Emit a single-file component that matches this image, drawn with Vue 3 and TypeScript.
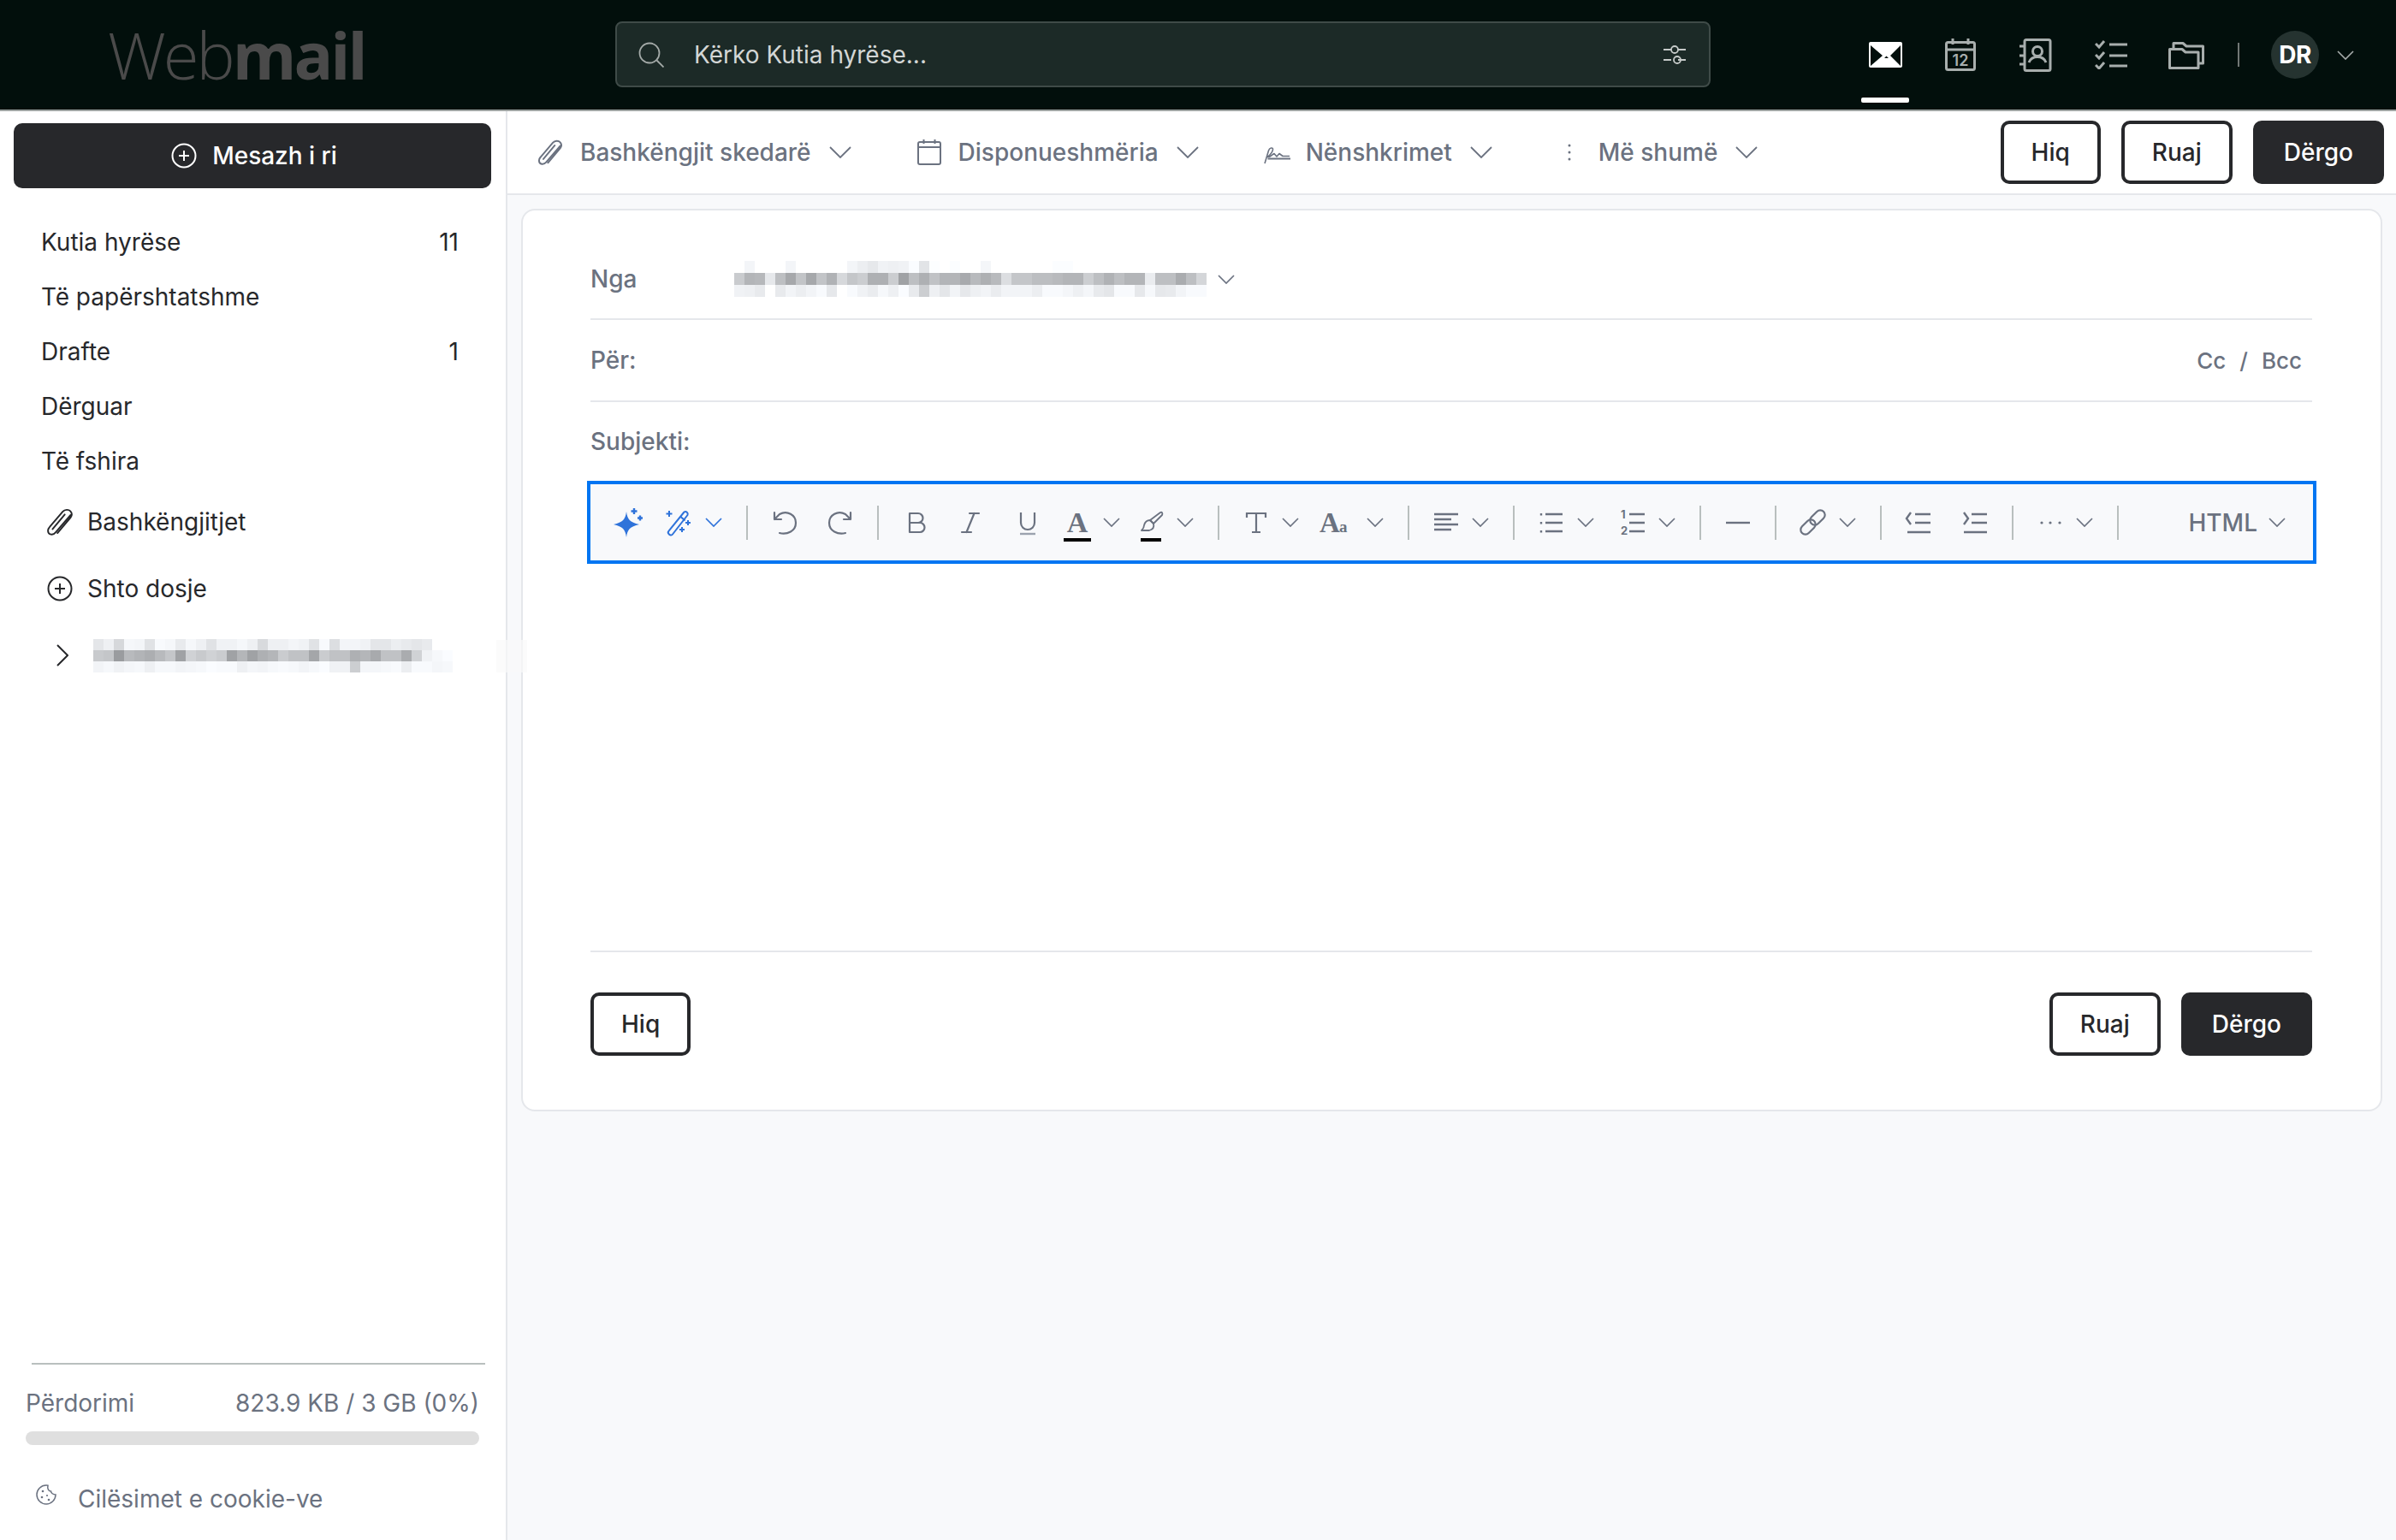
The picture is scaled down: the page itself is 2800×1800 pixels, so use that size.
<script setup lang="ts">
interface ToolItem { i: string; c?: boolean; g?: number; cm?: number; bar?: number }

const icons: Record<string, string> = {
  spark: '<path fill="#2f73da" d="M16 5C17.200 14 20 17.500 31 20C20 22.500 17.200 26 16 35C14.800 26 12 22.500 1 20C12 17.500 14.800 14 16 5Z"/><path stroke="#2f73da" stroke-width="2.400" fill="none" d="M25 1V8M21.500 4.500H28.500M32 9.500V15.500M29 12.500H35"/>',
  wand: '<g stroke="#2f73da" stroke-width="2" fill="none"><path stroke-linejoin="round" d="M23.500 5.500a2.800 2.800 0 0 1 4 3.500L10 31.500a2.500 2.500 0 0 1-3.800.2l-.5-.5a2.500 2.500 0 0 1-.2-3.500Z"/><path d="M19.500 11l5 4.500"/><path d="M6 4v7M2.500 7.500h7M28 15v6M25 18h6M21 23v6M18 26h6"/></g>',
  undo: '<path fill="none" stroke="#6b7280" stroke-width="2.200" stroke-linecap="round" stroke-linejoin="round" d="M12 30C21 32 31 28 31 18C31 9 21 3 12 8L6 14M6 6V14H14"/>',
  redo: '<path fill="none" stroke="#6b7280" stroke-width="2.200" stroke-linecap="round" stroke-linejoin="round" d="M24 30C15 32 5 28 5 18C5 9 15 3 24 8L30 14M30 6V14H22"/>',
  b: '<path fill="none" stroke="#6b7280" stroke-width="2.200" stroke-linejoin="round" d="M9 7H19A5.500 5.500 0 0 1 19 18H9ZM9 18H21A5.500 5.500 0 0 1 21 29H9Z"/>',
  i: '<path fill="none" stroke="#6b7280" stroke-width="2.200" stroke-linecap="round" d="M17 7H28M8 29H19M22.500 7L13.500 29"/>',
  u: '<path fill="none" stroke="#6b7280" stroke-width="2.200" d="M10 6V18A8 8 0 0 0 26 18V6"/><path stroke="#9ca3af" stroke-width="2.400" d="M9 31H27"/>',
  a: '<text x="18" y="29" text-anchor="middle" font-family="Liberation Serif" font-weight="700" font-size="34" fill="#6b7280">A</text>',
  brush: '<g fill="none" stroke="#6b7280" stroke-width="1.800" stroke-linejoin="round"><path d="M29 6C31 5 32 7 31 9L21 19L17 15Z"/><path d="M17 15C13 15 11 17 10 21C10 24 8 26 7 27H16C20 26 22 23 21 19Z"/></g>',
  t: '<path fill="none" stroke="#6b7280" stroke-width="2.200" d="M7 12V7H29V12M18 7V29M13 29H23"/>',
  aa: '<text x="0" y="29" font-family="Liberation Serif" font-weight="700" font-size="33" fill="#6b7280">A</text><text x="23" y="29" font-family="Liberation Serif" font-weight="700" font-size="19" fill="#6b7280">a</text>',
  align: '<path stroke="#6b7280" stroke-width="2.400" d="M4 8H32M4 14H24M4 20H32M4 26H24"/>',
  list: '<path stroke="#6b7280" stroke-width="2.400" d="M11 8H31M11 18H31M11 28H31"/><path stroke="#6b7280" stroke-width="2.400" stroke-dasharray="2.400 7.600" d="M6 7V30"/>',
  num: '<path stroke="#6b7280" stroke-width="2.400" d="M14 8H32M14 18H32M14 28H32"/><text x="4" y="13" font-family="Inter" font-weight="700" font-size="13" fill="#6b7280">1</text><text x="4" y="32" font-family="Inter" font-weight="700" font-size="13" fill="#6b7280">2</text>',
  hr: '<path stroke="#6b7280" stroke-width="2.400" d="M4 18H32"/>',
  link: '<g fill="none" stroke="#6b7280" stroke-width="2.200"><rect x="-10" y="-5.500" width="20" height="11" rx="5.500" transform="translate(12 23) rotate(-45)"/><rect x="-10" y="-5.500" width="20" height="11" rx="5.500" transform="translate(23 12) rotate(-45)"/></g>',
  out: '<path fill="none" stroke="#6b7280" stroke-width="2.400" d="M9 6L4 13L9 20M14 8H32M14 18H32M5 29H32"/>',
  ind: '<path fill="none" stroke="#6b7280" stroke-width="2.400" d="M5 6L10 13L5 20M14 8H32M14 18H32M5 29H32"/>',
  dots: '<g fill="#6b7280"><circle cx="8" cy="18" r="1.600"/><circle cx="18" cy="18" r="1.600"/><circle cx="29" cy="18" r="1.600"/></g>',
}

const groups: ToolItem[][] = [
  [{ i: 'spark' }, { i: 'wand', c: true, g: 24 }],
  [{ i: 'undo' }, { i: 'redo', g: 29 }],
  [{ i: 'b', g: 2 }, { i: 'i', g: 26 }, { i: 'u', g: 31 }, { i: 'a', c: true, g: 22, bar: 32 }, { i: 'brush', c: true, g: 15, bar: 24 }],
  [{ i: 't', c: true }, { i: 'aa', c: true, g: 21, cm: 19 }],
  [{ i: 'align', c: true }],
  [{ i: 'list', c: true }, { i: 'num', c: true, g: 24 }],
  [{ i: 'hr' }],
  [{ i: 'link', c: true }],
  [{ i: 'out' }, { i: 'ind', g: 30 }],
  [{ i: 'dots', c: true }],
]

const folders = [
  { name: 'Kutia hyrëse', count: '11' },
  { name: 'Të papërshtatshme', count: '' },
  { name: 'Drafte', count: '1' },
  { name: 'Dërguar', count: '' },
  { name: 'Të fshira', count: '' },
]

const parse = (s: string): string[] =>
  s.split(' ').map((h) => {
    const v = parseInt(h, 16)
    return `rgb(${v},${Math.min(255, v + 2)},${Math.min(255, v + 5)})`
  })

const fromBlur = [
  'ff f3 ff ff ff f3 ff ff ff ff ff f3 ec e6 f0 ee f0 fa e2 fc ff fb ff ff f4 ff ff ff ff ff ff fb fb ff ff ff ff ff ff ff ff ff ff ff ff ff',
  'c9 b3 b6 e6 bd a6 c2 a6 c2 b0 d6 c4 cb ae ae cb a0 bd ae c0 b3 b3 a8 b8 ae b8 dc c4 c4 bc bc b8 b3 b3 cc bd b0 bd b3 b3 ea bd bd aa bd d4',
  'f0 ee e8 ff e8 f2 ec f2 f8 e6 ff f8 f0 ea f6 ee fa e8 cc ee e4 f2 e6 ee f2 ea f2 f2 f2 ec f8 f8 f4 ee f4 e8 e4 f8 f8 e6 f6 e6 e8 f2 f8 f8',
].map(parse)

const accBlur = [
  'e4 ee d6 f5 f3 e0 f8 f5 e8 f5 ee e0 f0 f0 f5 ee d8 ee ee f3 f0 e0 f8 dc f3 f3 f0 e4 e4 ec e8 e4 e8 ff ff',
  'c8 c4 9a b8 b2 ac b8 c4 a0 d0 c8 d0 ca a0 b4 a0 ae b4 ca c0 c0 a4 ca c0 c0 ae b4 a8 c0 c0 aa d0 f0 f6 fa',
  'f2 f6 f0 f4 f6 ee f6 f6 f2 f4 f6 fa f8 f8 ee f4 f2 f6 f8 f6 f2 f6 fa f0 f0 cc f4 f4 f6 f8 ec f8 f8 f4 f6',
].map(parse)
</script>

<template>
  <div class="app">
    <header class="top">
      <div class="logo-wrap"><span class="logo"><span class="thin">Web</span><b>mail</b></span></div>
      <div class="search">
        <svg class="s-ic" width="30" height="30" viewBox="0 0 30 30" fill="none" stroke="#a4aaa8" stroke-width="1.800"><circle cx="13" cy="13" r="11.500"/><path d="M21.500 21.500L29.500 29.500"/></svg>
        <span class="s-text">Kërko Kutia hyrëse...</span>
        <svg class="s-f" width="28" height="24" viewBox="0 0 28 24" fill="none" stroke="#c6cac9" stroke-width="1.800"><path d="M1 6H10M18 6H27M1 18H10M18 18H27"/><circle cx="14" cy="6" r="4"/><circle cx="17" cy="18" r="4"/></svg>
      </div>
      <nav class="nav">
        <span class="nav-item active">
          <svg width="39" height="30" viewBox="0 0 39 30"><rect width="39" height="30" rx="2" fill="#fff"/><path fill="#020f0c" d="M2 4L16 16L2 28ZM37 4L25 16L37 28ZM20.500 16.500L18 19H23Z"/></svg>
        </span>
        <span class="nav-item">
          <svg width="36" height="38" viewBox="0 0 36 38" fill="none" stroke="#a8aead" stroke-width="3"><rect x="1.500" y="4.500" width="33" height="32" rx="2"/><path d="M1.500 13H34.500M9 0V7M27 0V7" /><text x="18" y="32" text-anchor="middle" font-family="Inter" font-weight="600" font-size="18" fill="#a8aead" stroke="none">12</text></svg>
        </span>
        <span class="nav-item">
          <svg width="38" height="39" viewBox="0 0 38 39" fill="none" stroke="#a8aead" stroke-width="3"><rect x="6" y="1.500" width="30" height="36" rx="2"/><circle cx="21" cy="15" r="5.500"/><path d="M11 28C13 23 17 21.500 21 21.500C25 21.500 29 23 31 28"/><path d="M0 9H6M0 20H6M0 30H6"/></svg>
        </span>
        <span class="nav-item">
          <svg width="38" height="34" viewBox="0 0 38 34" fill="none" stroke="#a8aead" stroke-width="3"><path d="M17 5H38M17 18H38M17 30H38"/><path d="M1 4L5 8L11 1M1 17L5 21L11 14M1 29L5 33L11 26"/></svg>
        </span>
        <span class="nav-item">
          <svg width="42" height="34" viewBox="0 0 42 34" fill="none" stroke="#a8aead" stroke-width="3" stroke-linejoin="round"><path d="M6 10.500V3.500H17L21 7H40.500V27H35"/><path d="M1.500 32.500H35V14H20L16 10.500H1.500Z"/></svg>
        </span>
      </nav>
      <span class="nav-div"></span>
      <span class="avatar">DR</span>
      <svg class="nav-chev" width="20" height="11" viewBox="0 0 20 11" fill="none" stroke="#a8aead" stroke-width="1.600"><path d="M1 1L10 10L19 1"/></svg>
    </header>

    <div class="body">
      <aside class="side">
        <button class="new">
          <svg width="30" height="30" viewBox="0 0 30 30" fill="none" stroke="#fff" stroke-width="2"><circle cx="15" cy="15" r="13.500"/><path d="M15 9V21M9 15H21"/></svg>
          Mesazh i ri
        </button>
        <ul class="menu">
          <li v-for="f in folders" :key="f.name" class="m-row"><span>{{ f.name }}</span><span>{{ f.count }}</span></li>
        </ul>
        <div class="act">
          <svg width="30" height="33" viewBox="1 0 26 29" fill="none" stroke="#27282b" stroke-width="1.700" stroke-linecap="round"><path d="M25 7L9.500 25C7 28 2 27.500 1.800 23.500C1.700 22 2.300 20.500 3.500 19.200L17 3.500C19 1.200 23 1 24.700 3C26.500 5 26.500 7.500 25 9.500L11.500 25.500"/><path d="M19 6.500L6.500 21.500"/></svg>
          <span>Bashkëngjitjet</span>
        </div>
        <div class="act">
          <svg width="30" height="30" viewBox="0 0 30 30" fill="none" stroke="#27282b" stroke-width="2"><circle cx="15" cy="15" r="13.500"/><path d="M15 9V21M9 15H21"/></svg>
          <span>Shto dosje</span>
        </div>
        <div class="acc">
          <svg class="acc-ch" width="14" height="26" viewBox="0 0 14 26" fill="none" stroke="#27282b" stroke-width="2"><path d="M1 1L13 13L1 25"/></svg>
          <div class="blur">
            <div v-for="(r, ri) in accBlur" :key="ri" class="b-row">
              <i v-for="(c, ci) in r" :key="ci" class="cell" :style="{ background: c }"></i>
            </div>
          </div>
        </div>
        <div class="ghost"></div>
        <div class="foot">
          <div class="f-line"></div>
          <div class="use"><span>Përdorimi</span><span>823.9 KB / 3 GB (0%)</span></div>
          <div class="bar"></div>
          <div class="cookie">
            <svg width="24" height="24" viewBox="0 0 24 24" fill="none" stroke="#6b7280" stroke-width="1.500"><path d="M12 1C6 1 1 6 1 12C1 18 6 23 12 23C18 23 23 18 23 12C20 12 17.500 10 17.500 8C15 8 13 5 14 1.200C13.500 1 12.500 1 12 1Z"/><g fill="#6b7280" stroke="none"><circle cx="8" cy="8" r="1.300"/><circle cx="7" cy="15" r="1.300"/><circle cx="13" cy="13" r="1.100"/><circle cx="15" cy="18" r="1.300"/></g></svg>
            <span>Cilësimet e cookie-ve</span>
          </div>
        </div>
      </aside>

      <main class="main">
        <div class="bar-top">
          <div class="tool t1">
            <svg width="28" height="31" viewBox="1 0 26 29" fill="none" stroke="#6b7280" stroke-width="1.800" stroke-linecap="round"><path d="M25 7L9.500 25C7 28 2 27.500 1.800 23.500C1.700 22 2.300 20.500 3.500 19.200L17 3.500C19 1.200 23 1 24.700 3C26.500 5 26.500 7.500 25 9.500L11.500 25.500"/><path d="M19 6.500L6.500 21.500"/></svg>
            <span>Bashkëngjit skedarë</span>
            <svg class="tchev" width="26" height="14" viewBox="0 0 26 14" fill="none" stroke="#6b7280" stroke-width="1.800"><path d="M1 1L13 13L25 1"/></svg>
          </div>
          <div class="tool t2">
            <svg width="28" height="30" viewBox="0 0 28 30" fill="none" stroke="#6b7280" stroke-width="2"><rect x="1" y="3" width="26" height="26" rx="2"/><path d="M1 9H27M7.500 0V5M20.500 0V5"/></svg>
            <span>Disponueshmëria</span>
            <svg class="tchev" width="26" height="14" viewBox="0 0 26 14" fill="none" stroke="#6b7280" stroke-width="1.800"><path d="M1 1L13 13L25 1"/></svg>
          </div>
          <div class="tool t3">
            <svg class="sign" width="32" height="20" viewBox="0 0 32 20" fill="none" stroke="#6b7280" stroke-width="1.600" stroke-linejoin="round"><path d="M1 19L5.500 4C6.500 0.500 10.500 0 10.500 2.500C10.500 6 7 9 4.500 11.500C7 12 9 9 12 7.500L15 11L18 7.500L22 10.500H30"/><path d="M4.500 13.500H31" stroke-width="2"/></svg>
            <span>Nënshkrimet</span>
            <svg class="tchev" width="26" height="14" viewBox="0 0 26 14" fill="none" stroke="#6b7280" stroke-width="1.800"><path d="M1 1L13 13L25 1"/></svg>
          </div>
          <div class="tool t4">
            <svg width="4" height="22" viewBox="0 0 4 22" fill="#6b7280"><circle cx="2" cy="3" r="1.500"/><circle cx="2" cy="11" r="1.500"/><circle cx="2" cy="19" r="1.500"/></svg>
            <span>Më shumë</span>
            <svg class="tchev" width="26" height="14" viewBox="0 0 26 14" fill="none" stroke="#6b7280" stroke-width="1.800"><path d="M1 1L13 13L25 1"/></svg>
          </div>
          <div class="top-btns">
            <button class="btn">Hiq</button>
            <button class="btn">Ruaj</button>
            <button class="btn dark">Dërgo</button>
          </div>
        </div>

        <section class="card">
          <div class="row r-from">
            <span class="lab">Nga</span>
            <div class="blur from">
              <div v-for="(r, ri) in fromBlur" :key="ri" class="b-row">
                <i v-for="(c, ci) in r" :key="ci" class="cell" :style="{ background: c }"></i>
              </div>
            </div>
            <svg class="from-ch" width="20" height="11" viewBox="0 0 20 11" fill="none" stroke="#6b7280" stroke-width="1.700"><path d="M1 1L10 10L19 1"/></svg>
          </div>
          <div class="row r-to">
            <span class="lab">Për:</span>
            <span class="cc"><span>Cc</span><span>/</span><span>Bcc</span></span>
          </div>
          <div class="row r-sub"><span class="lab">Subjekti:</span></div>

          <div class="rte">
            <template v-for="(g, gi) in groups" :key="gi">
              <span v-if="gi > 0" class="sep"></span>
              <span class="grp">
                <span v-for="it in g" :key="it.i" class="ti" :style="{ marginLeft: (it.g || 0) + 'px' }">
                  <span class="ib">
                    <svg width="36" height="36" viewBox="0 0 36 36" v-html="icons[it.i]"></svg>
                    <span v-if="it.bar" class="ibar" :style="{ width: it.bar + 'px' }"></span>
                  </span>
                  <svg v-if="it.c" class="rch" :class="{ blue: it.i === 'wand' }" :style="it.cm ? { marginLeft: it.cm + 'px' } : undefined" width="20" height="11" viewBox="0 0 20 11" fill="none" stroke-width="1.700"><path d="M1 1L10 10L19 1"/></svg>
                </span>
              </span>
            </template>
            <span class="sep"></span>
            <span class="html">HTML<svg class="rch html-ch" width="20" height="11" viewBox="0 0 20 11" fill="none" stroke-width="1.700"><path d="M1 1L10 10L19 1"/></svg></span>
          </div>

          <div class="editor"></div>
          <div class="actions">
            <button class="btn">Hiq</button>
            <span class="sp"></span>
            <button class="btn">Ruaj</button>
            <button class="btn dark">Dërgo</button>
          </div>
        </section>
      </main>
    </div>
  </div>
</template>

<style>
html, body { margin: 0; padding: 0; background: #fff; }
</style>

<style scoped>
.app { height: 100vh; display: flex; flex-direction: column; font-family: Inter, "Liberation Sans", sans-serif; font-size: 28px; color: #27282b; overflow: hidden; }
.top { height: 128px; flex: none; background: #020f0c; border-bottom: 2px solid #9ea3a1; display: flex; align-items: center; }
.logo-wrap { width: 719px; flex: none; padding-left: 126px; box-sizing: border-box; }
.logo { font-size: 76px; line-height: 1; color: #4a4a4a; letter-spacing: -3px; font-family: "Open Sans", Inter, sans-serif; }
.thin { font-weight: 300; }
.logo b { font-weight: 700; }
.search { width: 1280px; height: 77px; box-sizing: border-box; background: #1c2a27; border: 2px solid #3f4b48; border-radius: 8px; display: flex; align-items: center; padding: 0 25px; margin-top: -1px; }
.s-text { margin-left: 35px; color: #d3d6d5; flex: 1; }
.s-f { margin-right: 1px; }
.nav { display: flex; gap: 32px; margin-left: 176px; align-self: stretch; }
.nav-item { width: 56px; display: flex; align-items: center; justify-content: center; position: relative; }
.active::after { content: ""; position: absolute; left: 0; right: 0; bottom: 8px; height: 6px; background: #fff; border-radius: 2px; }
.nav-div { width: 2px; height: 28px; background: #717775; margin-left: 32px; }
.avatar { width: 56px; height: 56px; border-radius: 50%; background: #253330; color: #fff; font-weight: 700; display: flex; align-items: center; justify-content: center; margin-left: 37px; letter-spacing: -0.500px; }
.nav-chev { margin-left: 21px; }
.body { flex: 1; display: flex; min-height: 0; }
.side { width: 593px; flex: none; box-sizing: border-box; background: #fff; border-right: 2px solid #e5e7eb; display: flex; flex-direction: column; position: relative; }
.new { margin: 14px 17px 0 16px; height: 76px; padding-left: 10px; background: #27282b; color: #fff; border: 0; border-radius: 10px; font: 500 28px Inter, sans-serif; display: flex; align-items: center; justify-content: center; gap: 18px; }
.menu { list-style: none; margin: 31px 0 0; padding: 0 55px 0 48px; }
.m-row { height: 64px; display: flex; align-items: center; justify-content: space-between; }
.act { height: 78px; display: flex; align-items: center; gap: 17px; padding-left: 55px; }
.acc { height: 78px; display: flex; align-items: center; padding-left: 66px; gap: 29px; }
.blur { display: flex; flex-direction: column; }
.b-row { display: flex; }
.cell { width: 12px; height: 13px; display: block; flex: none; }
.from .cell { height: 14px; }
.ghost { position: absolute; left: 580px; top: 618px; width: 36px; height: 38px; background: rgba(250,250,250,.7); }
.foot { margin-top: auto; padding: 0 31px 0 30px; color: #6b7280; }
.f-line { height: 2px; background: #b9bfbe; margin: 0 -7px 0 7px; }
.use { display: flex; justify-content: space-between; margin-top: 28px; height: 34px; align-items: center; }
.bar { height: 16px; background: #dfdfdf; border-radius: 8px; margin-top: 16px; }
.cookie { display: flex; align-items: center; height: 34px; margin: 46px 0 31px 12px; gap: 25px; }
.cookie svg { margin-top: -10px; }
.main { flex: 1; min-width: 0; background: #f8f9fb; display: flex; flex-direction: column; }
.bar-top { height: 96px; flex: none; background: #fff; border-bottom: 2px solid #e5e7eb; display: flex; align-items: center; padding: 0 14px 0 36px; color: #6b7280; font-weight: 500; }
.tool { display: flex; align-items: center; }
.tool > span { margin-left: 21px; }
.tchev { margin-left: 21px; }
.t2 { margin-left: 77px; }
.t2 > span { margin-left: 20px; }
.t3 { margin-left: 76px; }
.t3 > span { margin-left: 17px; }
.sign { margin-top: 8px; }
.t4 { margin-left: 88px; }
.t4 > span { margin-left: 32px; }
.top-btns { margin-left: auto; display: flex; gap: 24px; }
.btn { height: 74px; box-sizing: border-box; padding: 0 32px; background: #fff; border: 4px solid #27282b; border-radius: 10px; font: 500 28px Inter, sans-serif; color: #27282b; }
.btn.dark { background: #27282b; color: #fff; }
.card { margin: 16px 16px 0 16px; height: 1055px; box-sizing: border-box; background: #fff; border: 2px solid #e5e7eb; border-radius: 16px; padding: 34px 80px 0 79px; display: flex; flex-direction: column; }
.row { display: flex; align-items: center; border-bottom: 2px solid #e5e7eb; color: #6b7280; font-weight: 500; height: 94px; flex: none; box-sizing: border-box; }
.r-to { justify-content: space-between; height: 96px; }
.r-sub { border: 0; height: 92px; }
.lab { width: 168px; flex: none; }
.from-ch { margin-left: 13px; }
.cc { margin-right: 12px; font-size: 26px; display: flex; gap: 16px; }
.rte { height: 97px; box-sizing: border-box; margin: 0 -5px 0 -4px; flex: none; background: #f8f9fb; border: 4px solid #0075f2; display: flex; align-items: center; padding-left: 26px; color: #6b7280; }
.sep { width: 2px; height: 40px; background: #b9bfbe; margin: 0 25px; flex: none; }
.grp { display: flex; align-items: center; }
.ti { display: flex; align-items: center; }
.ib { width: 36px; height: 36px; display: block; position: relative; }
.ib svg { display: block; overflow: visible; }
.ibar { position: absolute; left: 50%; transform: translateX(-50%); top: 36px; height: 4px; background: #000; }
.rch { margin-left: 12px; margin-right: 3px; stroke: #6b7280; }
.rch.blue { stroke: #2f73da; }
.html { margin-left: auto; font-weight: 500; padding-right: 32px; display: flex; align-items: center; }
.html-ch { margin-left: 13px; margin-right: 0; }
.editor { height: 454px; flex: none; border-bottom: 2px solid #e5e7eb; box-sizing: border-box; }
.actions { display: flex; gap: 24px; margin-top: 47px; }
.sp { flex: 1; }
</style>
